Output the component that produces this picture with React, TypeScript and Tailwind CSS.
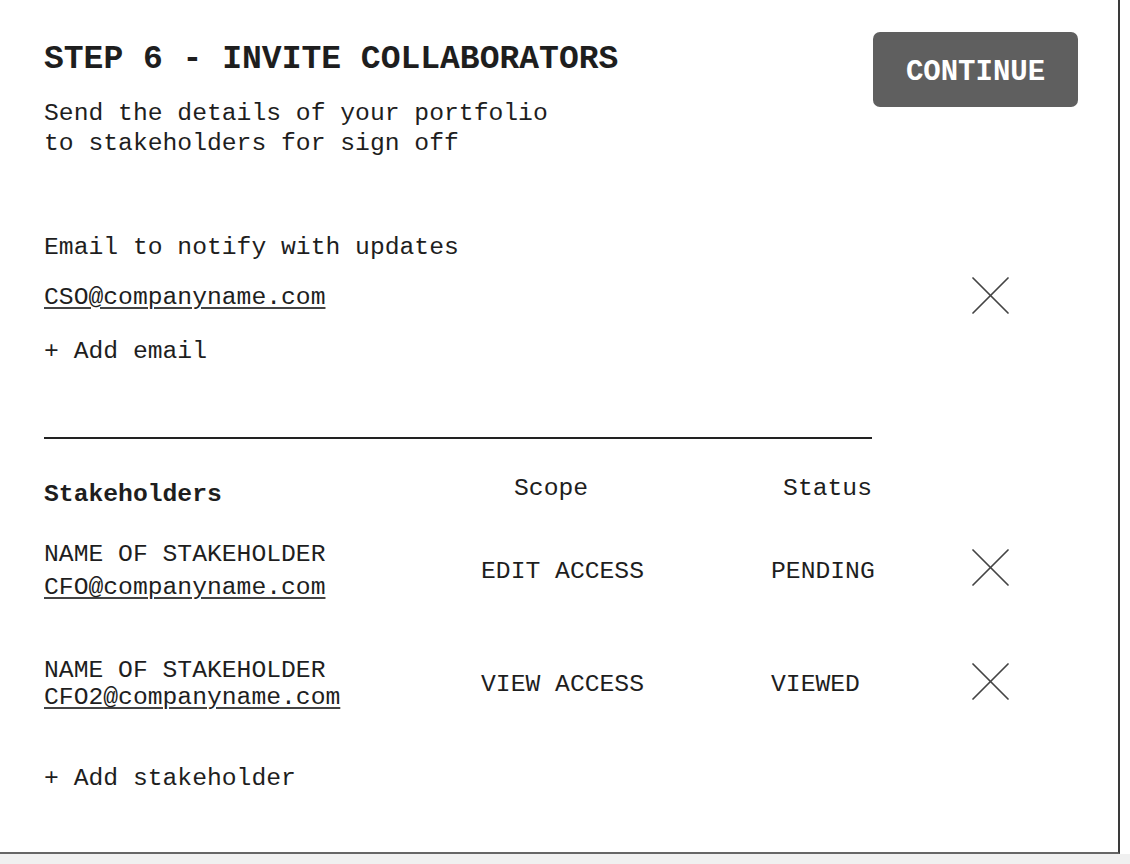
import React from 'react';

type Stakeholder = {
  name: string;
  email: string;
  scope: string;
  status: string;
};

const stakeholders: Stakeholder[] = [
  { name: 'NAME OF STAKEHOLDER', email: 'CFO@companyname.com', scope: 'EDIT ACCESS', status: 'PENDING' },
  { name: 'NAME OF STAKEHOLDER', email: 'CFO2@companyname.com', scope: 'VIEW ACCESS', status: 'VIEWED' },
];

const CloseIcon: React.FC = () => (
  <svg width="37" height="37" viewBox="0 0 37 37" className="shrink-0">
    <line x1="1" y1="1" x2="36" y2="36" stroke="#444" strokeWidth="1.7" strokeLinecap="round" />
    <line x1="36" y1="1" x2="1" y2="36" stroke="#444" strokeWidth="1.7" strokeLinecap="round" />
  </svg>
);

const App: React.FC = () => {
  return (
    <div className="min-h-screen bg-white font-['Liberation_Mono','DejaVu_Sans_Mono',monospace] text-[#1e1e1e]">
      <div className="w-[1120px] h-[854px] border-r-2 border-b-2 border-r-[#3a3a3a] border-b-[#666] bg-white pl-[44px] pr-[40px]">
        {/* Header */}
        <div className="flex justify-between items-start">
          <div className="mt-[40px]">
            <h1 className="text-[33px] leading-[40px] font-bold">STEP 6 - INVITE COLLABORATORS</h1>
            <p className="mt-[18px] text-[24.7px] leading-[30px]">
              Send the details of your portfolio
              <br />
              to stakeholders for sign off
            </p>
          </div>
          <button className="mt-[32px] w-[205px] h-[75px] pt-[6px] rounded-[7px] bg-[#5f5f5f] text-white text-[29px] font-bold">
            CONTINUE
          </button>
        </div>

        {/* Email notifications */}
        <div className="mt-[74px] text-[24.7px] leading-[30px]">Email to notify with updates</div>
        <div className="mt-[15px] flex items-center">
          <span className="w-[928px] text-[24.7px] leading-[30px]">
            <span className="underline underline-offset-[3px] decoration-[length:1.5px] decoration-[#444]">
              CSO@companyname.com
            </span>
          </span>
          <div className="pb-[2px]">
            <CloseIcon />
          </div>
        </div>
        <div className="mt-[20px] text-[24.7px] leading-[30px]">+ Add email</div>

        <div className="mt-[71px] w-[828px] h-[2px] bg-[#222]" />

        {/* Stakeholders */}
        <div className="mt-[34px] flex items-start text-[24.7px] leading-[30px]">
          <div className="w-[437px] mt-[6px] font-bold">Stakeholders</div>
          <div className="w-[290px] pl-[33px]">Scope</div>
          <div className="w-[101px] text-right">Status</div>
        </div>

        {stakeholders.map((s, i) => (
          <div
            key={s.email}
            className={`flex items-center text-[24.7px] ${i === 0 ? 'mt-[30px]' : 'mt-[55px]'}`}
          >
            <div className={`w-[437px] ${i === 0 ? 'leading-[30px]' : 'leading-[27px]'}`}>
              <div>{s.name}</div>
              <div className={i === 0 ? 'mt-[3px]' : ''}>
                <span className="underline underline-offset-[3px] decoration-[length:1.5px] decoration-[#444]">
                  {s.email}
                </span>
              </div>
            </div>
            <div className="w-[290px] leading-[30px]">{s.scope}</div>
            <div className="w-[201px] leading-[30px]">{s.status}</div>
            <div className="pb-[6px]">
              <CloseIcon />
            </div>
          </div>
        ))}

        <div className="mt-[52px] text-[24.7px] leading-[30px]">+ Add stakeholder</div>
      </div>
      <div className="h-[10px] bg-[#f0f0f0]" />
    </div>
  );
};

export default App;
